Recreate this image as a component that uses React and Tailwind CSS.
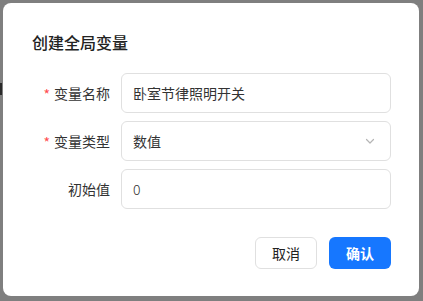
import React from 'react';

const font = { fontFamily: '"Noto Sans CJK SC", "Noto Sans", sans-serif' };

function Field({ label, required, children }) {
  return (
    <div className="flex items-center">
      <div className="w-[78px] flex justify-end items-center text-sm text-[#333]">
        {required && <span className="text-[#ff4d4f] mr-[4px] text-sm leading-none mt-[2px]">*</span>}
        <span>{label}</span>
      </div>
      <div className="ml-[11px] w-[270px] h-[40px] rounded-md border border-[#e0e0e0] bg-white flex items-center px-[11px] text-sm text-[#333]">
        {children}
      </div>
    </div>
  );
}

export default function App() {
  return (
    <div className="relative w-[423px] h-[301px] bg-[#7f7f7f] pt-[3px] pl-[3px] overflow-hidden" style={font}>
      {/* page content peeking behind the mask */}
      <div className="absolute left-0 top-[83px] w-[2px] h-[12px] bg-[#2a2a2a]" />
      <div className="relative w-[416px] h-[293px] rounded-lg bg-white pt-[27px] pl-[29px] pr-[28px]">
        <div className="text-base leading-6 font-medium text-[#222]">创建全局变量</div>

        <div className="mt-[19px] flex flex-col gap-[8px]">
          <Field label="变量名称" required>卧室节律照明开关</Field>
          <Field label="变量类型" required>
            <span className="flex-1">数值</span>
            <svg width="12" height="12" viewBox="0 0 12 12" className="mr-[3px]">
              <path d="M2.5 4.5 L6 8 L9.5 4.5" fill="none" stroke="#b5b5b5" strokeWidth="1.2" strokeLinecap="round" strokeLinejoin="round" />
            </svg>
          </Field>
          <Field label="初始值"><span className="font-light">0</span></Field>
        </div>

        <div className="mt-[28px] flex justify-end gap-[12px]">
          <button className="w-[62px] h-[32px] rounded-md border border-[#e0e0e0] bg-white text-sm text-[#222]">取消</button>
          <button className="w-[62px] h-[32px] rounded-md bg-[#1677ff] text-sm font-semibold text-white">确认</button>
        </div>
      </div>
    </div>
  );
}
